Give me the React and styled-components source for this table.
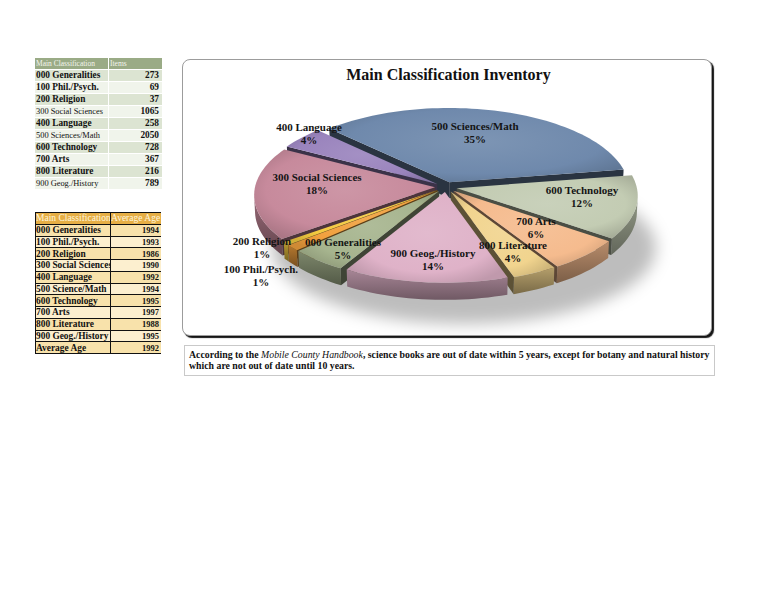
import React from "react";
import styled, { createGlobalStyle } from "styled-components";

const GlobalStyle = createGlobalStyle`
  html, body { margin: 0; padding: 0; background: #ffffff; }
  body { font-family: "Liberation Serif", "DejaVu Serif", serif; color: #111; }
`;

const inventory = [
  { name: "000 Generalities", items: 273 },
  { name: "100 Phil./Psych.", items: 69 },
  { name: "200 Religion", items: 37 },
  { name: "300 Social Sciences", items: 1065, small: true },
  { name: "400 Language", items: 258 },
  { name: "500 Sciences/Math", items: 2050, small: true },
  { name: "600 Technology", items: 728 },
  { name: "700 Arts", items: 367 },
  { name: "800 Literature", items: 216 },
  { name: "900 Geog./History", items: 789, small: true },
];

const ages = [
  ["000 Generalities", 1994],
  ["100 Phil./Psych.", 1993],
  ["200 Religion", 1986],
  ["300 Social Sciences", 1990],
  ["400 Language", 1992],
  ["500 Science/Math", 1994],
  ["600 Technology", 1995],
  ["700 Arts", 1997],
  ["800 Literature", 1988],
  ["900 Geog./History", 1995],
  ["Average Age", 1992],
];

const Page = styled.div`
  display: flex;
  align-items: flex-start;
  gap: 21px;
  padding: 58px 0 0 35px;
  width: 768px;
  height: 594px;
  box-sizing: border-box;
`;

const LeftColumn = styled.div`
  display: flex;
  flex-direction: column;
  gap: 23px;
  width: 126px;
`;

const ItemsTable = styled.div`
  display: grid;
  grid-template-columns: 73px 53px;
  grid-auto-rows: 11px;
  gap: 1px;
  background: #ffffff;
`;

const ItemCell = styled.div`
  display: flex;
  align-items: center;
  justify-content: ${(p) => (p.$num ? "flex-end" : "flex-start")};
  padding: ${(p) => (p.$num ? "0 3px 0 0" : "0 0 0 1px")};
  background: ${(p) => (p.$head ? "#9aab86" : p.$shade ? "#dce4d2" : "#f0f4eb")};
  color: ${(p) => (p.$head ? "#f4f6ee" : "#111")};
  font-size: ${(p) => (p.$head ? "7.5px" : p.$small ? "8.4px" : "9.3px")};
  font-weight: ${(p) => (p.$head || p.$small ? 400 : 700)};
  white-space: nowrap;
  overflow: hidden;
  line-height: 11px;
`;

const AgeTable = styled.div`
  display: grid;
  grid-template-columns: 74px 50px;
  grid-auto-rows: 10.75px;
  gap: 1px;
  background: #111;
  border: 1px solid #111;
`;

const AgeCell = styled.div`
  display: flex;
  align-items: center;
  justify-content: ${(p) => (p.$num ? "flex-end" : "flex-start")};
  padding: ${(p) => (p.$num ? "0 2px 0 0" : "0")};
  background: ${(p) => (p.$head ? "#e6ae45" : p.$shade ? "#f8e2ab" : "#fcefcf")};
  color: ${(p) => (p.$head ? "#fff6dc" : "#111")};
  font-size: ${(p) => (p.$head ? "9.5px" : p.$num ? "8.5px" : "9.4px")};
  font-weight: ${(p) => (p.$head ? 400 : 700)};
  white-space: nowrap;
  overflow: hidden;
  line-height: 10px;
`;

const RightColumn = styled.div`
  display: flex;
  flex-direction: column;
`;

const ChartBox = styled.div`
  margin-top: 1px;
  width: 530px;
  height: 277px;
  box-sizing: border-box;
  border: 1px solid #9c9c9c;
  border-radius: 8px;
  box-shadow: 2px 2px 1px #151515;
  display: flex;
  flex-direction: column;
  align-items: center;
  overflow: hidden;
  background: #fff;
`;

const ChartTitle = styled.div`
  margin-top: 5px;
  height: 20px;
  line-height: 20px;
  font-size: 16px;
  font-weight: 700;
  color: #111;
  padding-left: 3px;
`;

const PieSvg = styled.svg`
  display: block;
  width: 528px;
  height: 250px;
`;

const Caption = styled.div`
  margin: 9px 0 0 2px;
  width: 531px;
  height: 31px;
  box-sizing: border-box;
  border: 1px solid #c9c9c9;
  padding: 3px 4px;
  font-size: 9.8px;
  font-weight: 700;
  line-height: 11px;
  color: #111;
`;

const Book = styled.span`
  font-style: italic;
  font-weight: 400;
`;

/* ---------- 3D pie geometry ---------- */
const slices = [
  { v: 273, color: "#a6b48e" },
  { v: 69, color: "#f1a03e" },
  { v: 37, color: "#f3ca40" },
  { v: 1065, color: "#c78a9c" },
  { v: 258, color: "#9a84bd" },
  { v: 2050, color: "#6f89ac" },
  { v: 728, color: "#c3ccb3" },
  { v: 367, color: "#f5bb8e" },
  { v: 216, color: "#f1d48e" },
  { v: 789, color: "#dfb2c8" },
];

const labels = [
  { x: 309, y: 131, t: ["400 Language", "4%"] },
  { x: 475, y: 130, t: ["500 Sciences/Math", "35%"] },
  { x: 317, y: 181, t: ["300 Social Sciences", "18%"] },
  { x: 582, y: 194, t: ["600 Technology", "12%"] },
  { x: 536, y: 225, t: ["700 Arts", "6%"] },
  { x: 513, y: 249, t: ["800 Literature", "4%"] },
  { x: 433, y: 257, t: ["900 Geog./History", "14%"] },
  { x: 343, y: 246, t: ["000 Generalities", "5%"] },
  { x: 262, y: 245, t: ["200 Religion", "1%"] },
  { x: 261, y: 273, t: ["100 Phil./Psych.", "1%"] },
];

const R = 180;
const H = 18;
const DIST = 1800;
const PHI = (27 * Math.PI) / 180;
const SN = Math.sin(PHI);
const CS = Math.cos(PHI);
const CX = 446;
const CY = 187;
const EXP = 11;
const START = 210;
const rad = (d) => (d * Math.PI) / 180;

function proj(px, pz, py) {
  const depth = pz * CS - py * SN;
  const f = DIST / (DIST + depth);
  const up = pz * SN + py * CS;
  return [CX + px * f, CY - up * f];
}

function arc(ox, oz, a0, a1, py) {
  const n = Math.max(2, Math.ceil(Math.abs(a1 - a0) / 2));
  const pts = [];
  for (let i = 0; i <= n; i++) {
    const t = rad(a0 + ((a1 - a0) * i) / n);
    pts.push(proj(ox + R * Math.sin(t), oz + R * Math.cos(t), py));
  }
  return pts;
}

const pathOf = (pts) =>
  "M" + pts.map((p) => p[0].toFixed(2) + " " + p[1].toFixed(2)).join(" L") + " Z";

function shade(hex, k) {
  const n = parseInt(hex.slice(1), 16);
  const ch = [(n >> 16) & 255, (n >> 8) & 255, n & 255].map((c) => {
    const v = k <= 1 ? c * k : c + (255 - c) * (k - 1);
    return Math.max(0, Math.min(255, Math.round(v)));
  });
  return "rgb(" + ch.join(",") + ")";
}

function buildPie() {
  const total = slices.reduce((s, x) => s + x.v, 0);
  let acc = START;
  const built = slices.map((s, i) => {
    const a0 = acc;
    const a1 = acc + (s.v / total) * 360;
    acc = a1;
    const m = (a0 + a1) / 2;
    const ox = EXP * Math.sin(rad(m));
    const oz = EXP * Math.cos(rad(m));
    const apexT = proj(ox, oz, 0);
    const apexB = proj(ox, oz, -H);
    const topArc = arc(ox, oz, a0, a1, 0);
    const top = pathOf([apexT, ...topArc]);

    const walls = [];
    const lim = (Math.acos(-R / (DIST * CS)) * 180) / Math.PI;
    [0, 360].forEach((k) => {
      const lo = Math.max(a0, lim + k);
      const hi = Math.min(a1, 360 - lim + k);
      if (lo < hi) {
        const t = arc(ox, oz, lo, hi, 0);
        const b = arc(ox, oz, lo, hi, -H).reverse();
        walls.push(pathOf([...t, ...b]));
      }
    });

    const sides = [];
    const DC = DIST * CS;
    const startFacing = ox * Math.cos(rad(a0)) - Math.sin(rad(a0)) * (DC + oz) > 0;
    const endFacing = -ox * Math.cos(rad(a1)) + Math.sin(rad(a1)) * (DC + oz) > 0;
    const rim = (a, py) =>
      proj(ox + R * Math.sin(rad(a)), oz + R * Math.cos(rad(a)), py);
    if (startFacing) sides.push(pathOf([apexT, rim(a0, 0), rim(a0, -H), apexB]));
    if (endFacing) sides.push(pathOf([apexT, rim(a1, 0), rim(a1, -H), apexB]));

    return { i, color: s.color, depth: Math.cos(rad(m)), top, walls, sides };
  });
  return built.sort((a, b) => b.depth - a.depth);
}

const pie = buildPie();

function PieChart() {
  return (
    <PieSvg viewBox="183 85 528 250">
      <defs>
        <filter id="shadowBlur" x="-20%" y="-40%" width="140%" height="180%">
          <feGaussianBlur stdDeviation="8" />
        </filter>
        {slices.map((s, i) => (
          <radialGradient key={"t" + i} id={"top" + i} cx="50%" cy="45%" r="62%">
            <stop offset="0%" stopColor={shade(s.color, 1.1)} />
            <stop offset="70%" stopColor={s.color} />
            <stop offset="100%" stopColor={shade(s.color, 0.86)} />
          </radialGradient>
        ))}
        {slices.map((s, i) => (
          <linearGradient key={"w" + i} id={"wall" + i} x1="0" y1="0" x2="0" y2="1">
            <stop offset="0%" stopColor={shade(s.color, 0.75)} />
            <stop offset="100%" stopColor={shade(s.color, 0.5)} />
          </linearGradient>
        ))}
      </defs>
      <ellipse
        cx="464"
        cy="248"
        rx="192"
        ry="76"
        fill="rgba(0,0,0,0.26)"
        filter="url(#shadowBlur)"
      />
      {pie.map((p) => (
        <g key={p.i}>
          {p.walls.map((d, k) => (
            <path key={"w" + k} d={d} fill={`url(#wall${p.i})`} />
          ))}
          {p.sides.map((d, k) => (
            <path key={"s" + k} d={d} fill={shade(p.color, 0.38)} />
          ))}
          <path d={p.top} fill={`url(#top${p.i})`} />
        </g>
      ))}
      {labels.map((l) => (
        <text
          key={l.t[0]}
          x={l.x}
          y={l.y}
          textAnchor="middle"
          fontFamily='"Liberation Serif", serif'
          fontWeight="700"
          fontSize="11"
          fill="#141414"
        >
          <tspan x={l.x} dy="0">{l.t[0]}</tspan>
          <tspan x={l.x} dy="12.5">{l.t[1]}</tspan>
        </text>
      ))}
    </PieSvg>
  );
}

export default function App() {
  return (
    <>
      <GlobalStyle />
      <Page>
        <LeftColumn>
          <ItemsTable>
            <ItemCell $head>Main Classification</ItemCell>
            <ItemCell $head>Items</ItemCell>
            {inventory.map((r, i) => (
              <React.Fragment key={r.name}>
                <ItemCell $shade={i % 2 === 0} $small={r.small}>{r.name}</ItemCell>
                <ItemCell $shade={i % 2 === 0} $num>{r.items}</ItemCell>
              </React.Fragment>
            ))}
          </ItemsTable>
          <AgeTable>
            <AgeCell $head>Main Classification</AgeCell>
            <AgeCell $head>Average Age</AgeCell>
            {ages.map(([n, y], i) => (
              <React.Fragment key={n}>
                <AgeCell $shade={i % 2 === 0}>{n}</AgeCell>
                <AgeCell $shade={i % 2 === 0} $num>{y}</AgeCell>
              </React.Fragment>
            ))}
          </AgeTable>
        </LeftColumn>
        <RightColumn>
          <ChartBox>
            <ChartTitle>Main Classification Inventory</ChartTitle>
            <PieChart />
          </ChartBox>
          <Caption>
            According to the <Book>Mobile County Handbook</Book>, science books are out of
            date within 5 years, except for botany and natural history which are not out of
            date until 10 years.
          </Caption>
        </RightColumn>
      </Page>
    </>
  );
}
